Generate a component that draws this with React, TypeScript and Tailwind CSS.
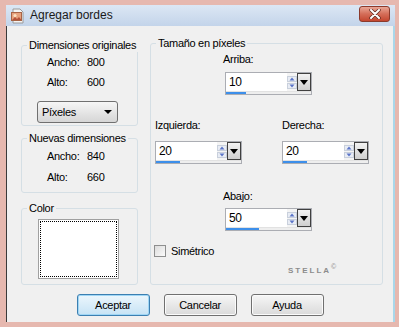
import React from "react";

function TitleIcon() {
  return (
    <svg width="16" height="16" viewBox="0 0 16 16">
      <path d="M3 1h7l3 3v11H3z" fill="#f4f4f4" stroke="#9a9a9a" />
      <rect x="1.5" y="4.5" width="10" height="8" fill="#e7a17d" stroke="#a86446" />
      <circle cx="5" cy="7.5" r="1.6" fill="#fbe2c4" />
      <path d="M2 12l3-3 2 2 2-2 2.5 3z" fill="#b5523a" />
    </svg>
  );
}

function CloseButton() {
  return (
    <div className="w-[31px] h-[16px] mt-[1px] mr-[5px] rounded-[3px] border border-[#8b3a2c] bg-gradient-to-b from-[#e9a696] via-[#d46d58] to-[#c4462f] flex items-center justify-center">
      <svg width="12" height="10" viewBox="0 0 12 10">
        <path d="M2 1l8 8M10 1l-8 8" stroke="#5b2a22" strokeWidth="3.4" strokeLinecap="round" />
        <path d="M2 1l8 8M10 1l-8 8" stroke="#ffffff" strokeWidth="2" strokeLinecap="round" />
      </svg>
    </div>
  );
}

function GroupBox({
  title,
  className,
  children,
}: {
  title: string;
  className: string;
  children?: React.ReactNode;
}) {
  return (
    <div className={`relative border border-[#d5dfe5] rounded-[3px] ${className}`}>
      <span className="absolute -top-[7px] left-[5px] px-[2px] bg-[#f0f0f0] leading-[13px] whitespace-nowrap">
        {title}
      </span>
      {children}
    </div>
  );
}

function InfoRow({ label, value }: { label: string; value: string }) {
  return (
    <div className="flex h-[13px] leading-[13px] pl-[25px]">
      <span className="w-[40px]">{label}</span>
      <span>{value}</span>
    </div>
  );
}

function SpinField({ value, bar }: { value: string; bar: number }) {
  return (
    <div className="w-[87px] h-[23px] flex flex-col border border-[#abadb3] bg-white">
      <div className="flex h-[18px]">
        <div className="flex-1 pl-[3px] text-[12px] leading-[18px]">{value}</div>
        <div className="w-[10px] flex flex-col justify-center gap-[1px] bg-[#f4f4f4]">
          <svg width="10" height="6" viewBox="0 0 10 6">
            <rect x="0.5" y="0.5" width="9" height="5" fill="#e8ecf4" stroke="#c9d0dc" />
            <path d="M2.5 4.5h5L5 1.5z" fill="#5b74c8" />
          </svg>
          <svg width="10" height="6" viewBox="0 0 10 6">
            <rect x="0.5" y="0.5" width="9" height="5" fill="#e8ecf4" stroke="#c9d0dc" />
            <path d="M2.5 1.5h5L5 4.5z" fill="#5b74c8" />
          </svg>
        </div>
        <div className="w-[14px] border border-[#404040] bg-gradient-to-b from-[#f2f2f2] to-[#cfcfcf] flex items-center justify-center">
          <svg width="8" height="5" viewBox="0 0 8 5">
            <path d="M0 0h8L4 5z" fill="#000" />
          </svg>
        </div>
      </div>
      <div className="flex-1 bg-[#eeeeee] border-t border-[#e2e2e2]">
        <div className="h-full bg-[#3d8fea]" style={{ width: bar }} />
      </div>
    </div>
  );
}

function Button({ label, primary }: { label: string; primary?: boolean }) {
  return (
    <div
      className={`w-[73px] h-[22px] rounded-[3px] border flex items-center justify-center ${
        primary
          ? "border-[#3c7fb1] bg-gradient-to-b from-[#ecf6fc] to-[#c6e3f5] shadow-[inset_0_0_0_1px_#9fd6f5]"
          : "border-[#707070] bg-gradient-to-b from-[#f6f6f6] to-[#dadada] shadow-[inset_0_0_0_1px_#fbfbfb]"
      }`}
    >
      {label}
    </div>
  );
}

export default function App() {
  return (
    <div className="w-[399px] h-[327px] bg-[#e6b8af] pl-[6px] pr-[4px] pt-[5px] pb-[5px] flex flex-col font-['Liberation_Sans',Arial,sans-serif] text-[11px] tracking-[-0.3px] text-black">
      <div className="h-[21px] flex items-start bg-gradient-to-b from-[#dce7f4] to-[#c3d4ea]">
        <div className="pl-[4px] pt-[3px]">
          <TitleIcon />
        </div>
        <span className="ml-[4px] mt-[3px] text-[12px] tracking-normal leading-[15px] text-[#1a1a1a]">
          Agregar bordes
        </span>
        <div className="ml-auto">
          <CloseButton />
        </div>
      </div>

      <div className="flex-1 bg-[#f0f0f0] border-l border-l-[#3a3a3a] border-r-2 border-r-[#a9d7ea] flex flex-col">
        <div className="flex pl-[14px] pt-[17px] gap-[12px]">
          <div className="flex flex-col w-[117px] mt-[2px]">
            <GroupBox title="Dimensiones originales" className="h-[81px] pt-[10px]">
              <InfoRow label="Ancho:" value="800" />
              <div className="h-[7px]" />
              <InfoRow label="Alto:" value="600" />
              <div className="ml-[15px] mt-[12px] w-[81px] h-[22px] rounded-[3px] border border-[#707070] bg-gradient-to-b from-[#f6f6f6] to-[#d6d6d6] flex items-center pl-[4px] pr-[5px]">
                <span className="flex-1">Píxeles</span>
                <svg width="8" height="4" viewBox="0 0 8 4">
                  <path d="M0 0h8L4 4z" fill="#000" />
                </svg>
              </div>
            </GroupBox>
            <GroupBox title="Nuevas dimensiones" className="h-[55px] mt-[12px] pt-[11px]">
              <InfoRow label="Ancho:" value="840" />
              <div className="h-[8px]" />
              <InfoRow label="Alto:" value="660" />
            </GroupBox>
            <GroupBox title="Color" className="h-[77px] mt-[15px] pt-[10px] pl-[16px]">
              <div className="w-[81px] h-[60px] border border-[#a0a0a0] bg-white p-[1px]">
                <div className="w-full h-full border border-dotted border-black" />
              </div>
            </GroupBox>
          </div>

          <GroupBox title="Tamaño en píxeles" className="w-[233px] h-[242px] pt-[9px]">
            <div className="pl-[72px] leading-[13px]">Arriba:</div>
            <div className="pl-[74px] mt-[6px]">
              <SpinField value="10" bar={20} />
            </div>
            <div className="flex pl-[4px] mt-[24px] gap-[40px]">
              <div className="flex flex-col">
                <span className="leading-[13px]">Izquierda:</span>
                <div className="mt-[9px]">
                  <SpinField value="20" bar={24} />
                </div>
              </div>
              <div className="flex flex-col">
                <span className="leading-[13px]">Derecha:</span>
                <div className="mt-[9px]">
                  <SpinField value="20" bar={24} />
                </div>
              </div>
            </div>
            <div className="pl-[72px] mt-[26px] leading-[13px]">Abajo:</div>
            <div className="pl-[74px] mt-[5px]">
              <SpinField value="50" bar={33} />
            </div>
            <div className="flex items-center gap-[5px] pl-[3px] mt-[13px] h-[14px]">
              <div className="w-[12px] h-[12px] border border-[#8e8f8f] bg-gradient-to-br from-[#dcdcdc] to-[#fbfbfb]" />
              <span className="leading-[13px]">Simétrico</span>
            </div>
            <div className="flex items-start pl-[137px] mt-[8px] text-[#8c8c8c]">
              <span className="text-[8px] leading-[10px] tracking-[2px] font-bold">STELLA</span>
              <span className="text-[7px] leading-[7px] -mt-[3px]">©</span>
            </div>
          </GroupBox>
        </div>

        <div className="mt-auto mb-[6px] flex justify-center gap-[14px]">
          <Button label="Aceptar" primary />
          <Button label="Cancelar" />
          <Button label="Ayuda" />
        </div>
      </div>
    </div>
  );
}
